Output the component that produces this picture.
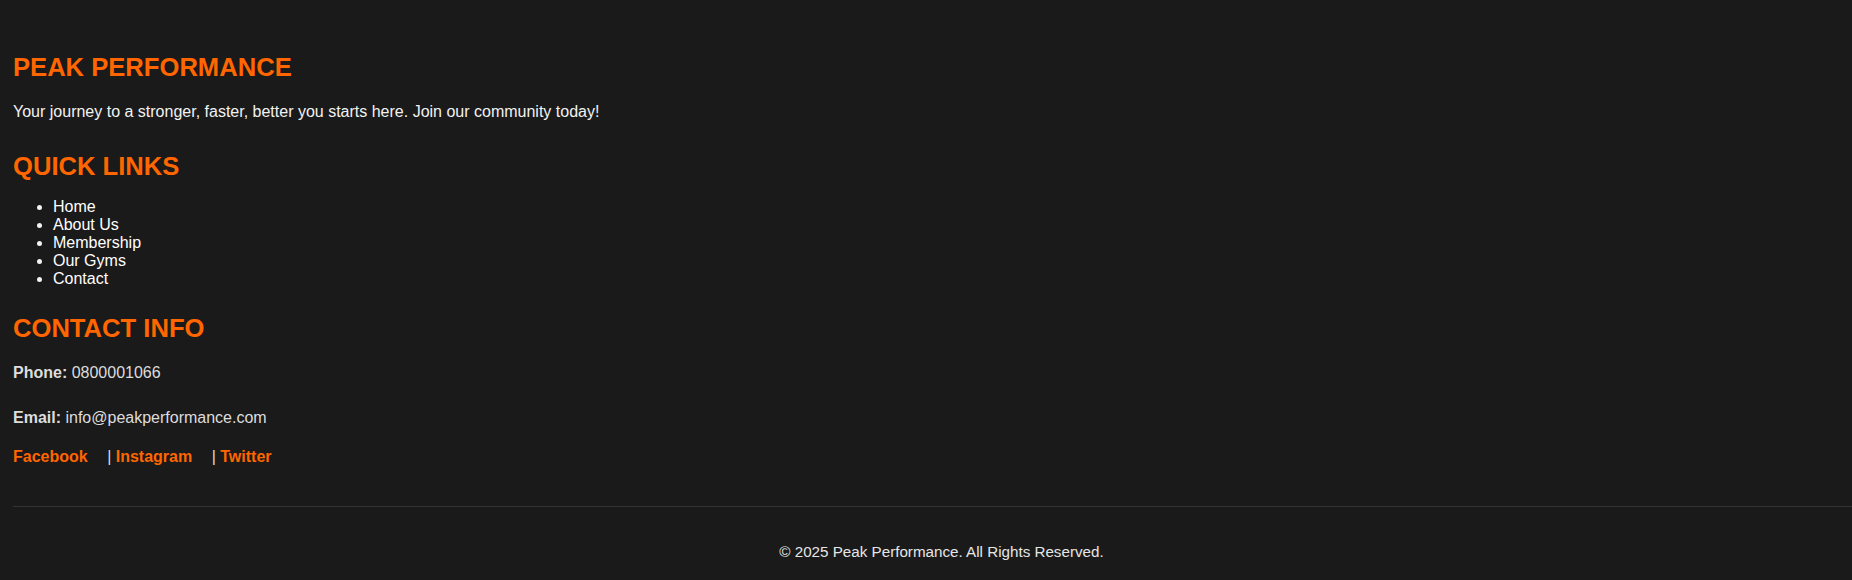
const quickLinks = ["Home", "About Us", "Membership", "Our Gyms", "Contact"];
const socials = ["Facebook", "Instagram", "Twitter"];

export default function App() {
  return (
    <div className="min-h-screen bg-[#1a1a1a] pl-[13px] pt-[53px] pb-[20px] font-['Liberation_Sans',Arial,sans-serif] text-[16px] leading-[normal] text-[#f2f2f2]">
      {/* brand */}
      <h2 className="text-[25.6px] font-bold text-[#ff6600]">PEAK PERFORMANCE</h2>
      <p className="mt-[21px]">
        Your journey to a stronger, faster, better you starts here. Join our community today!
      </p>

      {/* links */}
      <h2 className="mt-[31px] text-[25.6px] font-bold text-[#ff6600]">QUICK LINKS</h2>
      <ul className="mt-[17px] list-disc pl-[40px]">
        {quickLinks.map((l) => (
          <li key={l}>
            <a href="#" className="text-white">
              {l}
            </a>
          </li>
        ))}
      </ul>

      {/* contact */}
      <h2 className="mt-[26px] text-[25.6px] font-bold text-[#ff6600]">CONTACT INFO</h2>
      <p className="mt-[21px] text-[#dddddd]">
        <strong>Phone:</strong> 0800001066
      </p>
      <p className="mt-[27px] text-[#dddddd]">
        <strong>Email:</strong> info@peakperformance.com
      </p>
      <div className="mt-[21px] text-[#dddddd]">
        {socials.map((s, i) => (
          <span key={s}>
            {i > 0 && "| "}
            <a href="#" className="mr-[15px] font-bold text-[#ff6600]">
              {s}
            </a>
            {i < socials.length - 1 && " "}
          </span>
        ))}
      </div>

      <div className="mt-[40px] h-px bg-[#333333]" />

      <p className="mt-[36px] pl-[18px] text-center text-[15.2px] text-[#e6e6e6]">
        © 2025 Peak Performance. All Rights Reserved.
      </p>
    </div>
  );
}
